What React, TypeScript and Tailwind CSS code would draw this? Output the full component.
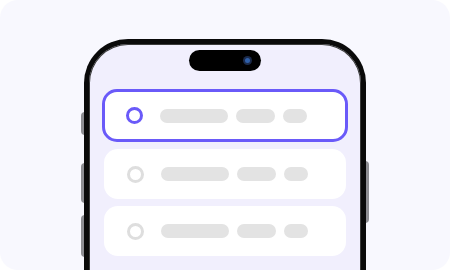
import React from 'react';

const rows = [{ active: true }, { active: false }, { active: false }];

const Row = ({ active }: { active: boolean }) => (
  <div
    className={
      active
        ? 'flex items-center h-[53px] rounded-[15px] bg-white border-[3px] border-[#6a5af9] pl-[21px]'
        : 'flex items-center h-[50px] mx-[2px] rounded-[14px] bg-white pl-[23px]'
    }
  >
    <div
      className={
        active
          ? 'w-[17px] h-[17px] rounded-full border-[3px] border-[#6a5af9]'
          : 'w-[17px] h-[17px] rounded-full border-[3px] border-[#dedede]'
      }
    />
    <div className="ml-[17px] flex items-center gap-[8px]">
      <div className="w-[68px] h-[14px] rounded-full bg-[#e3e3e3]" />
      <div className="w-[39px] h-[14px] rounded-full bg-[#e3e3e3]" />
      <div className="w-[24px] h-[14px] rounded-full bg-[#e3e3e3]" />
    </div>
  </div>
);

export default function App() {
  return (
    <div className="w-[450px] h-[270px] bg-white">
      <div className="w-[450px] h-[270px] rounded-[18px] bg-[#f8f8fe] overflow-hidden flex justify-center pt-[39px]">
        <div className="relative w-[282px] h-[260px] shrink-0">
          {/* side buttons */}
          <div className="absolute left-[-3px] top-[73px] w-[4px] h-[23px] rounded-l-sm bg-[#8e8e93]" />
          <div className="absolute left-[-3px] top-[124px] w-[4px] h-[40px] rounded-l-sm bg-[#8e8e93]" />
          <div className="absolute left-[-3px] top-[176px] w-[4px] h-[42px] rounded-l-sm bg-[#8e8e93]" />
          <div className="absolute right-[-3px] top-[122px] w-[4px] h-[62px] rounded-r-sm bg-[#8e8e93]" />

          {/* frame */}
          <div className="relative h-full rounded-t-[44px] border-[5px] border-b-0 border-[#0a0a0a] bg-[#f1effd] shadow-[inset_0_0_0_1px_#3a3a3a]">
            <div className="flex justify-center pt-[6px]">
              <div className="relative w-[72px] h-[21px] rounded-full bg-black">
                <div className="absolute left-[54px] top-[6px] w-[9px] h-[9px] rounded-full bg-[#1b2a4a]">
                  <div className="ml-[2px] mt-[2px] w-[5px] h-[5px] rounded-full bg-[#2f5fa8]" />
                </div>
              </div>
            </div>

            <div className="mt-[18px] ml-[13px] w-[246px] flex flex-col gap-[7px]">
              {rows.map((r, i) => (
                <Row key={i} active={r.active} />
              ))}
            </div>
          </div>
        </div>
      </div>
    </div>
  );
}
